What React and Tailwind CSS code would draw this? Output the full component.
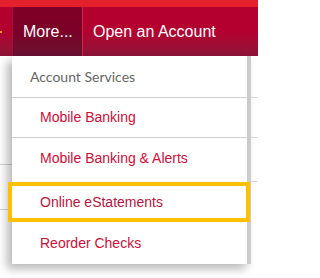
import React from 'react';

const itemText = 'font-["Liberation_Sans",Arial,sans-serif] text-[14px]';

const items = [
  { label: 'Mobile Banking', h: 'h-[40px] border-b border-[#cfcfcf]' },
  { label: 'Mobile Banking & Alerts', h: 'h-[40px] mb-[4px]' },
];

export default function App() {
  return (
    <div className="relative w-[258px] h-[278px] overflow-hidden bg-white">
      {/* top accent strip */}
      <div className="h-[7px] bg-[#e3202b]" />

      {/* main nav */}
      <div className="flex h-[49px] bg-gradient-to-b from-[#b5002f] via-[#b3002f] to-[#8e1338] text-white font-['Liberation_Sans',Arial,sans-serif] text-[16px]">
        <div className="relative w-[12px]">
          <span className="absolute left-0 top-[24px] w-[2px] h-[2px] bg-[#f39a1f]" />
        </div>
        <div className="flex items-center w-[70px] pl-[10px] border-l border-[#a0103c] bg-gradient-to-b from-[#800027] via-[#7b0027] to-[#6a1232]">
          More...
        </div>
        <div className="w-[1px] bg-[#d3244d]" />
        <div className="flex items-center pl-[10px]">Open an Account</div>
      </div>

      {/* page content behind the menu */}
      <div className="flex">
        <div className="w-[12px]">
          <div className="h-[109px] border-b border-[#d3d3d3]" />
          <div className="h-[45px] border-b border-[#d3d3d3]" />
        </div>
        <div className="flex-1" />
        <div className="w-[7px]">
          <div className="h-[42px] border-b border-[#dcdcdc]" />
          <div className="h-[40px] border-b border-[#dcdcdc]" />
          <div className="h-[44px] border-b border-[#dcdcdc]" />
        </div>
      </div>

      {/* dropdown */}
      <div className="absolute left-[12px] top-[56px] w-[239px] bg-white border-r-4 border-[#cccccc] shadow-[-5px_5px_9px_rgba(0,0,0,0.28)]">
        <div className="flex items-center h-[42px] pl-[18px] border-b border-[#cfcfcf] font-['Lato',sans-serif] text-[14px] text-[#666666]">
          Account Services
        </div>
        {items.map((it) => (
          <div key={it.label} className={`flex items-center pl-[28px] ${it.h} ${itemText} text-[#cc0e3a]`}>
            {it.label}
          </div>
        ))}
        <div className={`relative z-10 flex items-center -ml-[4px] w-[242px] h-[40px] pl-[28px] border-4 border-[#ffc000] bg-white ${itemText} text-[#b3163f]`}>
          Online eStatements
        </div>
        <div className={`flex items-center h-[42px] pl-[28px] ${itemText} text-[#cc0e3a]`}>
          Reorder Checks
        </div>
      </div>
    </div>
  );
}
